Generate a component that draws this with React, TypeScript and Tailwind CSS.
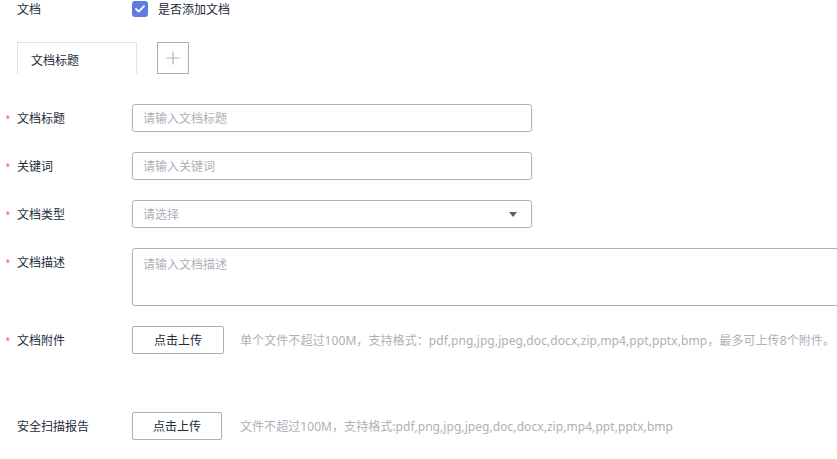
import React from "react";

const Star = () => (
  <span className="w-[12px] text-[#f66f6a] text-[12px] leading-none pt-[3px]">*</span>
);

const Label = ({ text, required = true }: { text: string; required?: boolean }) => (
  <div className="w-[132px] shrink-0 flex items-center pl-[5px] h-[28px]">
    {required ? <Star /> : <span className="w-[12px]" />}
    <span className="text-[#252b3a]">{text}</span>
  </div>
);

const helpFont = { fontFamily: '"Noto Sans", "Noto Sans CJK SC", sans-serif' };

export default function App() {
  return (
    <div
      className="w-[837px] h-[459px] bg-white overflow-hidden text-[12px] text-[#252b3a]"
      style={{ fontFamily: '"Noto Sans CJK SC", "Noto Sans", sans-serif' }}
    >
      {/* row 0 */}
      <div className="flex items-center h-[18px]">
        <div className="w-[132px] pl-[17px]">文档</div>
        <div className="w-[16px] h-[16px] rounded-[3px] bg-[#5e7ce0] flex items-center justify-center">
          <svg width="10" height="8" viewBox="0 0 10 8" fill="none">
            <path d="M1 4 L3.8 6.6 L9 1.2" stroke="white" strokeWidth="1.8" strokeLinecap="round" strokeLinejoin="round" />
          </svg>
        </div>
        <span className="ml-[10px]">是否添加文档</span>
      </div>

      {/* tabs */}
      <div className="flex mt-[24px] pl-[17px] gap-[20px]">
        <div className="w-[120px] h-[32px] border-t border-l border-r border-[#dfe1e6] flex items-center pl-[13px] pt-[2px] text-[#252b3a]">
          文档标题
        </div>
        <div className="w-[32px] h-[32px] border border-[#adb0b8] flex items-center justify-center">
          <svg width="14" height="14" viewBox="0 0 14 14">
            <path d="M7 0.5 V13.5 M0.5 7 H13.5" stroke="#adb0b8" strokeWidth="1.2" />
          </svg>
        </div>
      </div>

      {/* form rows */}
      <div className="flex flex-col gap-[20px] mt-[30px]">
        <div className="flex items-center">
          <Label text="文档标题" />
          <div className="w-[400px] h-[28px] border border-[#adb0b8] rounded-[3px] pl-[10px] flex items-center text-[#adb0b8]">
            请输入文档标题
          </div>
        </div>
        <div className="flex items-center">
          <Label text="关键词" />
          <div className="w-[400px] h-[28px] border border-[#adb0b8] rounded-[3px] pl-[10px] flex items-center text-[#adb0b8]">
            请输入关键词
          </div>
        </div>
        <div className="flex items-center">
          <Label text="文档类型" />
          <div className="w-[400px] h-[28px] border border-[#adb0b8] rounded-[3px] pl-[10px] pr-[14px] flex items-center justify-between text-[#adb0b8]">
            <span>请选择</span>
            <svg width="8" height="5" viewBox="0 0 8 5">
              <path d="M0 0 H8 L4 5 Z" fill="#575d6c" />
            </svg>
          </div>
        </div>
        <div className="flex items-start">
          <Label text="文档描述" />
          <div className="w-[720px] h-[58px] border border-[#adb0b8] rounded-[3px] pl-[10px] pt-[5px] leading-[20px] text-[#adb0b8] shrink-0">
            请输入文档描述
          </div>
        </div>
        <div className="flex items-center">
          <Label text="文档附件" />
          <div className="w-[92px] h-[28px] border border-[#adb0b8] rounded-[2px] flex items-center justify-center text-[#252b3a]">
            点击上传
          </div>
          <span className="ml-[16px] text-[#adb0b8] whitespace-nowrap tracking-[0.08px] pt-[1px]" style={helpFont}>
            单个文件不超过100M，支持格式：pdf,png,jpg,jpeg,doc,docx,zip,mp4,ppt,pptx,bmp，最多可上传8个附件。
          </span>
        </div>
      </div>

      <div className="flex items-center mt-[58px]">
        <Label text="安全扫描报告" required={false} />
        <div className="w-[90px] h-[28px] border border-[#adb0b8] rounded-[2px] flex items-center justify-center text-[#252b3a]">
          点击上传
        </div>
        <span className="ml-[18px] text-[#adb0b8] whitespace-nowrap tracking-[0.06px] pt-[1px]" style={helpFont}>
          文件不超过100M，支持格式:pdf,png,jpg,jpeg,doc,docx,zip,mp4,ppt,pptx,bmp
        </span>
      </div>
    </div>
  );
}
